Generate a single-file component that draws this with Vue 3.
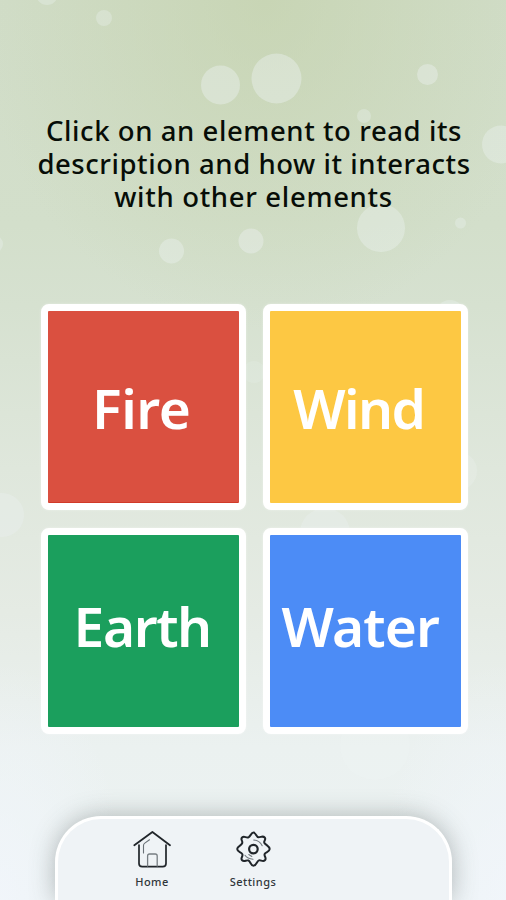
<script setup>
const lines = [
  { text: 'Click on an element to read its', cls: 'l1' },
  { text: 'description and how it interacts', cls: 'l2' },
  { text: 'with other elements', cls: 'l3' },
]
const elements = ['Fire', 'Wind', 'Earth', 'Water']
const bubbles = [
  [47, -6, 11, 0.3], [104, 18, 8, 0.3], [220.5, 85, 19.5, 0.38], [276.5, 78.5, 25, 0.38],
  [427.5, 74.5, 10.5, 0.36], [364, 116, 7, 0.3], [501, 144.5, 19, 0.34], [381, 228, 24, 0.34],
  [460.5, 223, 5.5, 0.3], [251, 241, 12.5, 0.36], [171.5, 251, 12.5, 0.34], [-6, 244, 9, 0.3],
  [450, 314, 14, 0.3], [2, 515, 22, 0.26], [325, 533, 25, 0.26], [458, 471, 19, 0.22],
  [254, 372, 11, 0.15], [375, 745, 35, 0.15],
]
</script>

<template>
  <main class="screen">
    <svg class="bubbles" viewBox="0 0 506 900" aria-hidden="true">
      <circle v-for="(b, i) in bubbles" :key="i" :cx="b[0]" :cy="b[1]" :r="b[2]" fill="#f0f5f6" :fill-opacity="b[3]" />
    </svg>
    <h1 class="intro">
      <span v-for="l in lines" :key="l.cls" :class="['line', l.cls]">{{ l.text }}</span>
    </h1>
    <section class="grid">
      <button v-for="e in elements" :key="e" :class="['card', e.toLowerCase()]"><span>{{ e }}</span></button>
    </section>
    <nav class="bar">
      <a class="item">
        <svg width="40" height="40" viewBox="0 0 40 40" fill="none" stroke="#20252a" stroke-linecap="round" stroke-linejoin="round">
          <path d="M2.300 17.200 20.400 4 38 17.200" stroke-width="1.800" />
          <path d="M7 17v18.500q0 3.200 3.200 3.200h20.600q3.200 0 3.200-3.200V17" stroke-width="1.700" />
          <path d="M15.600 38V28q0-2 2-2h5.600q2 0 2 2v10" stroke="#777e83" stroke-width="1.300" />
          <path d="M11.500 25V17.500q0-1.500 1.300-2.400l4.700-3.300" stroke="#697177" stroke-width="1.100" />
        </svg>
        <span>Home</span>
      </a>
      <a class="item">
        <svg width="40" height="40" viewBox="0 0 40 40" fill="none" stroke="#20252a" stroke-linecap="round" stroke-linejoin="round">
          <g transform="translate(0 0.800)">
            <path d="M20.500 3.800C23 3.800 23.200 8.400 25.500 8.500S29.700 6.600 31.700 8.700S29.900 12.200 31.500 14.300S36.700 17.500 36.700 20.300S32.300 23.100 31.600 25.300S34.100 29.300 31.900 31.500S27.500 30.600 25.600 31.700S23.400 36.900 20.500 36.900S17.600 32.500 15.400 31.700S11.200 33.700 9.100 31.500S10.400 27.600 9.300 25.300S4.200 23.200 4.200 20.300S8.400 17 9.200 14.300S7 10.900 9.100 8.700S13.200 9.600 15.500 8.500S18 3.800 20.500 3.800Z" stroke-width="2" />
            <circle cx="20.400" cy="20.300" r="4.300" stroke-width="2.200" />
            <path d="M20.700 11.200Q26.500 11.500 29.200 17M12 26.500Q14.500 30.100 20 30.400M15.800 25.700l3 2" stroke="#747b80" stroke-width="1.100" />
          </g>
        </svg>
        <span>Settings</span>
      </a>
    </nav>
  </main>
</template>

<style>
body { margin: 0; }
</style>

<style scoped>
.screen {
  position: relative;
  display: flex;
  flex-direction: column;
  box-sizing: border-box;
  width: 506px;
  height: 900px;
  padding-top: 114px;
  overflow: hidden;
  font-family: "Noto Sans", sans-serif;
  background:
    radial-gradient(ellipse 290px 330px at 265px 0, rgba(194, 208, 168, 0.6), rgba(204, 217, 188, 0)),
    radial-gradient(ellipse 130px 240px at 506px 900px, rgba(242, 246, 252, 0.8), rgba(242, 246, 252, 0)),
    radial-gradient(ellipse 130px 240px at 0 900px, rgba(242, 246, 252, 0.8), rgba(242, 246, 252, 0)),
    linear-gradient(#d1ddc8 0, #d3dfcb 25%, #d6e1d0 34%, #dfe7dc 52%, #e5ebe4 68%, #ebf1f0 83%, #ecf3f3 100%);
}
.bubbles { position: absolute; inset: 0; width: 506px; height: 900px; }
.intro {
  position: relative;
  display: flex;
  flex: none;
  flex-direction: column;
  align-items: center;
  height: 190px;
  margin: 0;
  color: #070d07;
  font-size: 27.500px;
  font-weight: 500;
  line-height: 33.200px;
  white-space: nowrap;
}
.l1 { letter-spacing: 0.580px; padding-left: 2px; }
.l2 { letter-spacing: 0.560px; padding-left: 2px; }
.l3 { letter-spacing: 0.680px; padding-left: 1px; }
.grid {
  position: relative;
  display: grid;
  flex: none;
  grid-template-columns: 205.400px 205.400px;
  grid-template-rows: 206px 206px;
  gap: 17.500px 16.200px;
  padding-left: 41px;
}
.card {
  display: flex;
  align-items: center;
  justify-content: center;
  box-sizing: border-box;
  padding: 0;
  border: 7px solid #fff;
  border-radius: 8px;
  color: #fff;
  font: 600 55px/60px "Noto Sans", sans-serif;
  box-shadow: 0 0 3px rgba(255, 255, 255, 0.4);
}
.fire { background: #da5040; padding: 1px 5px 0 0; letter-spacing: -0.400px; box-shadow: inset 0 -1px 0 #d13a28, 0 0 3px rgba(255, 255, 255, 0.4); }
.wind { background: #fdc843; padding: 1px 13px 0 0; letter-spacing: -1.600px; }
.earth { background: #1b9f5d; padding: 0 3px 9px 0; letter-spacing: -1.400px; }
.water { background: #4c8cf6; padding: 0 10px 9px 0; letter-spacing: -0.900px; }
.bar {
  position: relative;
  display: flex;
  flex: none;
  box-sizing: border-box;
  width: 396.500px;
  height: 84px;
  margin: 82.500px 0 0 55px;
  padding: 9px 0 0 64px;
  gap: 41px;
  border: 3px solid #fff;
  border-bottom: 0;
  border-radius: 46px 46px 0 0;
  background: #eff3f6;
  box-shadow: 0 0 24px rgba(70, 80, 80, 0.38);
}
.item { display: flex; flex-direction: column; align-items: center; width: 60px; color: #30363a; }
.item svg { flex: none; }
.item span { margin-top: 6px; font-size: 11px; font-weight: 500; line-height: 16px; letter-spacing: 0.450px; white-space: nowrap; }
</style>
